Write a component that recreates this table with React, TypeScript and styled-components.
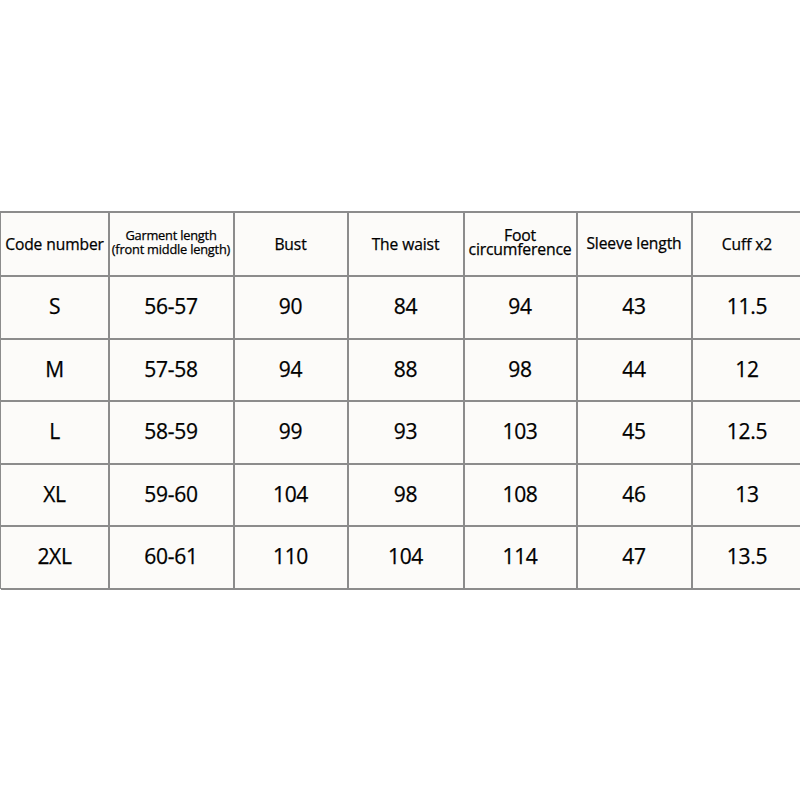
import React from "react";
import styled, { createGlobalStyle } from "styled-components";

const Global = createGlobalStyle`
  html, body { margin: 0; padding: 0; background: #ffffff; overflow: hidden; }
  body { width: 800px; height: 800px; }
`;

const Page = styled.div`
  width: 800px;
  height: 800px;
  padding-top: 212px;
  box-sizing: border-box;
  overflow: hidden;
  font-family: "Open Sans", "Noto Sans", sans-serif;
  color: #000;
  -webkit-text-stroke: 0.25px #000;
`;

const Grid = styled.div`
  width: 812px;
  display: grid;
  grid-template-columns: 108px 125px 114px 116px 113px 115px 111px;
  grid-template-rows: 63px 63px 62px 63px 62px 63px;
  border-top: 2px solid #8c8c8c;
  border-left: 2px solid #8c8c8c;
  margin-top: -1px;
  margin-left: -1px;
  background: #fcfbf9;
`;

const Cell = styled.div<{ $head?: boolean; $lift?: number }>`
  border-right: 2px solid #8c8c8c;
  border-bottom: 2px solid #8c8c8c;
  margin-right: -1px;
  margin-bottom: -1px;
  display: flex;
  flex-direction: column;
  align-items: center;
  justify-content: center;
  text-align: center;
  white-space: nowrap;
  font-size: ${(p) => (p.$head ? "15.6px" : "21px")};
  letter-spacing: ${(p) => (p.$head ? "-0.1px" : "-0.3px")};
  line-height: ${(p) => (p.$head ? "16px" : "24px")};
  padding-bottom: ${(p) => (p.$lift ? `${p.$lift}px` : "0")};
`;

const Small = styled.span<{ $size?: number }>`
  font-size: ${(p) => p.$size ?? 14}px;
  line-height: 14px;
  letter-spacing: -0.2px;
`;

const rows = [
  ["S", "56-57", "90", "84", "94", "43", "11.5"],
  ["M", "57-58", "94", "88", "98", "44", "12"],
  ["L", "58-59", "99", "93", "103", "45", "12.5"],
  ["XL", "59-60", "104", "98", "108", "46", "13"],
  ["2XL", "60-61", "110", "104", "114", "47", "13.5"],
];

export default function App() {
  return (
    <>
      <Global />
      <Page>
        <Grid>
          <Cell $head>Code number</Cell>
          <Cell $head $lift={4}>
            <Small $size={12.8}>Garment length</Small>
            <Small $size={12.8}>(front middle length)</Small>
          </Cell>
          <Cell $head>Bust</Cell>
          <Cell $head>The waist</Cell>
          <Cell $head $lift={4}>
            <Small $size={15.8}>Foot</Small>
            <Small $size={15.8}>circumference</Small>
          </Cell>
          <Cell $head $lift={3}>Sleeve length</Cell>
          <Cell $head>Cuff x2</Cell>
          {rows.map((r) =>
            r.map((v, i) => (
              <Cell key={r[0] + i} $lift={2}>
                {v}
              </Cell>
            ))
          )}
        </Grid>
      </Page>
    </>
  );
}
